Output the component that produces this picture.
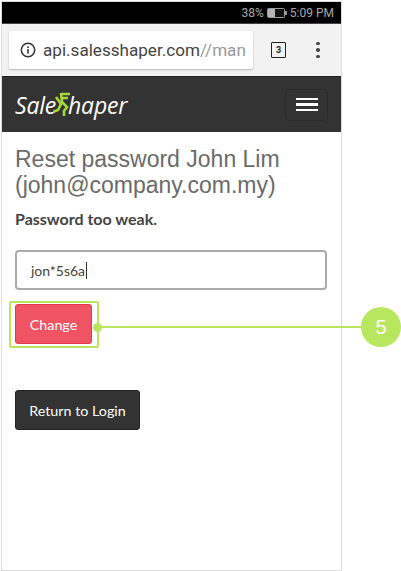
<div class="stage">
  <div class="phone">
    <div class="status">
      <span>38%</span>
      <svg class="battery" width="20" height="10" viewBox="0 0 20 10"><rect x="0.5" y="0.5" width="17" height="9" rx="1" fill="#111" stroke="#9a9a9a"/><rect x="1" y="1" width="7" height="8" fill="#b5b5b5"/><rect x="18" y="3" width="2" height="4" fill="#9a9a9a"/></svg>
      <span>5:09 PM</span>
    </div>
    <div class="chrome">
      <div class="url">
        <svg class="info" width="16" height="16" viewBox="0 0 16 16"><circle cx="8" cy="8" r="6.7" fill="none" stroke="#333" stroke-width="1.5"/><rect x="7.2" y="7" width="1.6" height="4.6" fill="#333"/><rect x="7.2" y="4.4" width="1.6" height="1.6" fill="#333"/></svg>
        <div class="address"><span class="host">api.salesshaper.com</span><span class="path">//manage</span></div>
      </div>
      <div class="tabs">3</div>
      <div class="dots"><i></i><i></i><i></i></div>
    </div>
    <header class="nav">
      <div class="logo">
        <span>Sale</span>
        <svg class="mark" width="18" height="26" viewBox="0 0 18 26" fill="none" stroke="#a6d637" stroke-width="2.6"><path d="M8 2h9M8 6h7M8 1l1 10"/><path d="M3 5l5 7-3 6-5 2M9 10l5 5-3 4 0 5"/></svg>
        <span>haper</span>
      </div>
      <button class="burger" aria-label="Menu"><i></i><i></i><i></i></button>
    </header>
    <main class="content">
      <h1>Reset password John Lim (john@company.com.my)</h1>
      <p class="error">Password too weak.</p>
      <div class="input"><span>jon*5s6a</span><b class="caret"></b></div>
      <div class="change-row"><button class="btn change">Change</button></div>
      <button class="btn back">Return to Login</button>
    </main>
  </div>
  <div class="callout">
    <div class="ring"></div>
    <div class="dot"></div>
    <div class="line"></div>
    <div class="badge">5</div>
  </div>
</div>

<style>
  :global(body) { margin: 0; background: #fff; }
  .stage { position: relative; width: 401px; height: 571px; overflow: hidden; font-family: "Lato", sans-serif; }
  .phone { width: 341px; height: 570px; box-sizing: border-box; border: 1px solid #dcdcdc; margin: 1px 0 0 1px; display: flex; flex-direction: column; }
  .status { height: 21px; background: #000; color: #a8a8a8; font: 12px "Roboto", sans-serif; display: flex; align-items: center; justify-content: flex-end; gap: 3px; padding-right: 7px; flex: none; }
  .battery { display: block; }
  .chrome { height: 54px; background: #f2f2f2; border-top: 1px solid #444; border-bottom: 1px solid #222; box-sizing: border-box; display: flex; align-items: center; flex: none; padding-left: 7px; }
  .url { width: 244px; height: 38px; background: #fff; border-radius: 2px; box-shadow: 0 1px 2px rgba(0,0,0,.25); display: flex; align-items: center; font: 17.100px "Roboto", sans-serif; white-space: nowrap; }
  .info { margin: 0 7px 0 11px; flex: none; }
  .address { flex: 1; min-width: 0; margin-right: 7px; overflow: hidden; }
  .host { color: #444; }
  .path { color: #999; }
  .tabs { margin-left: 18px; width: 13px; height: 14px; border: 1.5px solid #222; border-radius: 1px; font: bold 9px "Roboto", sans-serif; color: #222; display: flex; align-items: center; justify-content: center; }
  .dots { margin-left: 30px; display: flex; flex-direction: column; gap: 3px; }
  .dots i { width: 4px; height: 3.500px; border-radius: 50%; background: #444; display: block; }
  .nav { height: 55px; background: #333; display: flex; align-items: center; justify-content: space-between; padding: 0 13px; flex: none; }
  .logo { display: flex; align-items: center; color: #fff; font: italic 23px "Open Sans", sans-serif; letter-spacing: -0.2px; }
  .mark { margin: 0 -3px 0 -3px; }
  .burger { width: 43px; height: 32px; background: #333; border: 1px solid #2b2b2b; border-radius: 4px; padding: 0; display: flex; flex-direction: column; gap: 3px; align-items: center; justify-content: center; }
  .burger i { width: 22px; height: 2.500px; background: #fff; display: block; }
  .content { padding: 14px 13px 0; flex: 1; }
  h1 { margin: 0; font: 400 23px/26px "Liberation Sans", sans-serif; color: #6a6a6a; }
  .error { margin: 11px 0 0; font: 700 16px/20px "Lato", sans-serif; color: #444; }
  .input { margin-top: 21px; width: 312px; height: 40px; box-sizing: border-box; border: 2px solid #aaa; border-radius: 4px; display: flex; align-items: center; padding-left: 14px; font-size: 14px; color: #444; }
  .caret { width: 1px; height: 17px; background: #333; margin-left: 1px; }
  .change-row { margin-top: 14px; }
  .btn { font: 14.300px "Lato", sans-serif; color: #fff; border-radius: 3px; display: block; padding: 0; }
  .change { width: 77px; height: 40px; background: #ef5364; border: 1px solid #e2394b; }
  .back { width: 125px; height: 40px; margin-top: 46px; background: #333; border: 1px solid #222; }
  .callout { position: absolute; inset: 0; pointer-events: none; }
  .ring { position: absolute; left: 9px; top: 301px; width: 90px; height: 47px; box-sizing: border-box; border: 2px solid #b9e65f; border-radius: 2px; }
  .dot { position: absolute; left: 93px; top: 323px; width: 9px; height: 9px; border-radius: 50%; background: #b9e65f; }
  .line { position: absolute; left: 100px; top: 326px; width: 265px; height: 2px; background: #b9e65f; }
  .badge { position: absolute; left: 361px; top: 307px; width: 40px; height: 40px; border-radius: 50%; background: #b9e65f; color: #fff; font: 20px/40px "Liberation Sans", sans-serif; text-align: center; }
</style>
